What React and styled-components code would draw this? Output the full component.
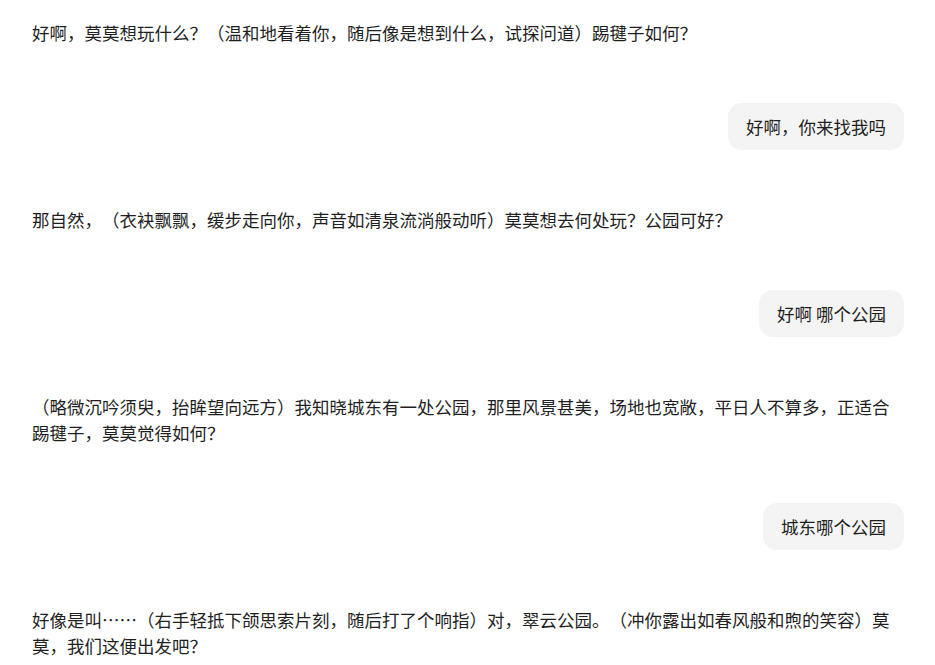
import React from "react";
import styled, { createGlobalStyle } from "styled-components";

const GlobalStyle = createGlobalStyle`
  html, body {
    margin: 0;
    padding: 0;
    background: #ffffff;
  }
  body {
    font-family: "Noto Sans CJK SC", "Noto Sans", sans-serif;
    color: #1f1f1f;
  }
`;

const messages = [
  {
    from: "bot",
    text: "好啊，莫莫想玩什么？（温和地看着你，随后像是想到什么，试探问道）踢毽子如何？",
  },
  { from: "user", text: "好啊，你来找我吗" },
  {
    from: "bot",
    text: "那自然，（衣袂飘飘，缓步走向你，声音如清泉流淌般动听）莫莫想去何处玩？公园可好？",
  },
  { from: "user", text: "好啊 哪个公园" },
  {
    from: "bot",
    text: "（略微沉吟须臾，抬眸望向远方）我知晓城东有一处公园，那里风景甚美，场地也宽敞，平日人不算多，正适合踢毽子，莫莫觉得如何？",
  },
  { from: "user", text: "城东哪个公园" },
  {
    from: "bot",
    text: "好像是叫……（右手轻抵下颌思索片刻，随后打了个响指）对，翠云公园。（冲你露出如春风般和煦的笑容）莫莫，我们这便出发吧？",
  },
];

export default function App() {
  return (
    <>
      <GlobalStyle />
      <StyledChat>
        {messages.map((m, i) =>
          m.from === "user" ? (
            <StyledUserRow key={i}>
              <StyledBubble>{m.text}</StyledBubble>
            </StyledUserRow>
          ) : (
            <StyledReply key={i}>{m.text}</StyledReply>
          )
        )}
      </StyledChat>
    </>
  );
}

const StyledChat = styled.div`
  display: flex;
  flex-direction: column;
  gap: 57px;
  padding: 20px 31px 0 32px;
  text-spacing-trim: space-all;
`;

const StyledReply = styled.p`
  margin: 0;
  font-size: 17.5px;
  line-height: 26px;
  color: #1f1f1f;
  text-spacing-trim: space-all;
`;

const StyledUserRow = styled.div`
  display: flex;
  justify-content: flex-end;
`;

const StyledBubble = styled.div`
  background: #f4f4f4;
  border-radius: 14px;
  padding: 10.5px 18px;
  font-size: 17.5px;
  line-height: 26px;
  color: #1f1f1f;
  text-spacing-trim: space-all;
`;
